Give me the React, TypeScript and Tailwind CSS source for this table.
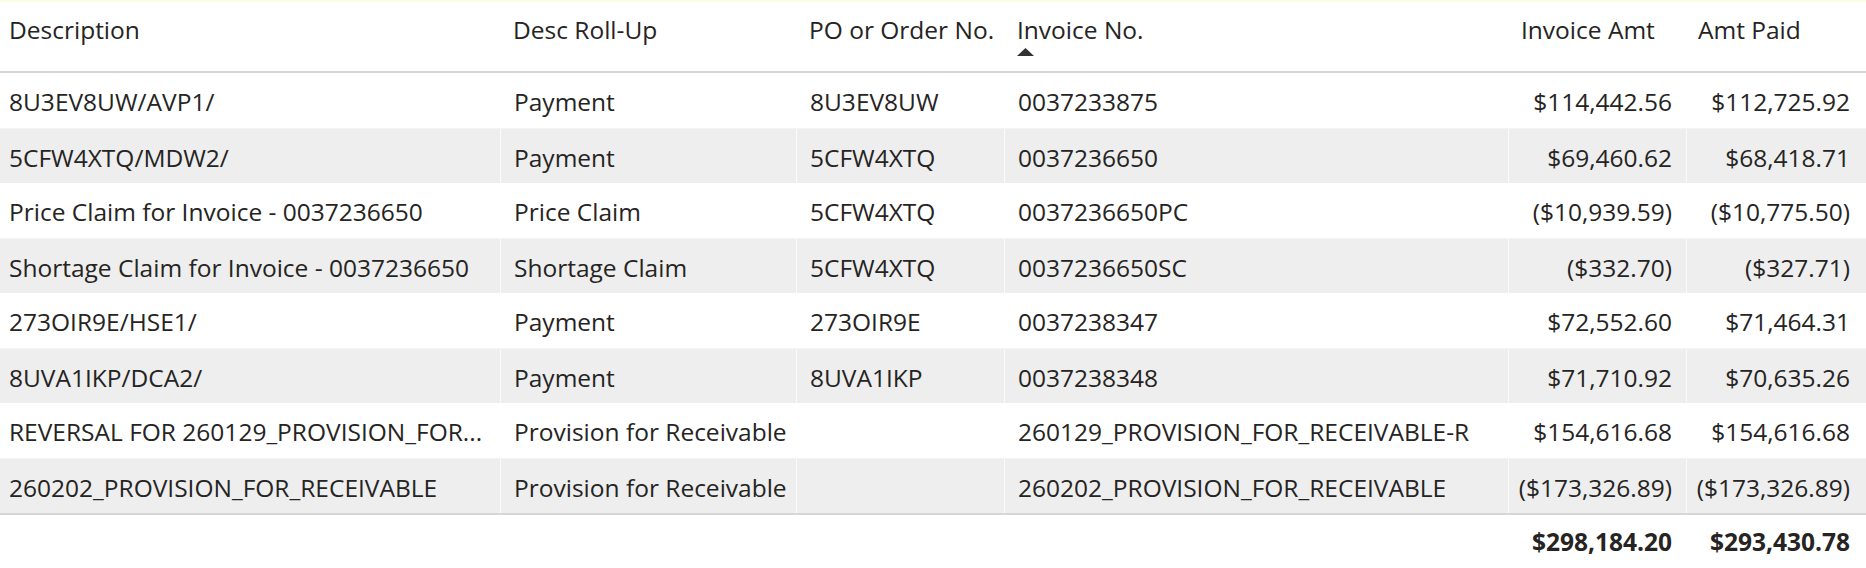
import { clsx } from 'clsx';

type Row = {
  desc: string;
  rollUp: string;
  po: string;
  invoice: string;
  amt: string;
  paid: string;
};

const ROWS: Row[] = [
  { desc: '8U3EV8UW/AVP1/', rollUp: 'Payment', po: '8U3EV8UW', invoice: '0037233875', amt: '$114,442.56', paid: '$112,725.92' },
  { desc: '5CFW4XTQ/MDW2/', rollUp: 'Payment', po: '5CFW4XTQ', invoice: '0037236650', amt: '$69,460.62', paid: '$68,418.71' },
  { desc: 'Price Claim for Invoice - 0037236650', rollUp: 'Price Claim', po: '5CFW4XTQ', invoice: '0037236650PC', amt: '($10,939.59)', paid: '($10,775.50)' },
  { desc: 'Shortage Claim for Invoice - 0037236650', rollUp: 'Shortage Claim', po: '5CFW4XTQ', invoice: '0037236650SC', amt: '($332.70)', paid: '($327.71)' },
  { desc: '273OIR9E/HSE1/', rollUp: 'Payment', po: '273OIR9E', invoice: '0037238347', amt: '$72,552.60', paid: '$71,464.31' },
  { desc: '8UVA1IKP/DCA2/', rollUp: 'Payment', po: '8UVA1IKP', invoice: '0037238348', amt: '$71,710.92', paid: '$70,635.26' },
  { desc: 'REVERSAL FOR 260129_PROVISION_FOR...', rollUp: 'Provision for Receivable', po: '', invoice: '260129_PROVISION_FOR_RECEIVABLE-R', amt: '$154,616.68', paid: '$154,616.68' },
  { desc: '260202_PROVISION_FOR_RECEIVABLE', rollUp: 'Provision for Receivable', po: '', invoice: '260202_PROVISION_FOR_RECEIVABLE', amt: '($173,326.89)', paid: '($173,326.89)' },
];

const GRID = 'grid grid-cols-[500px_296px_208px_504px_178px_180px]';
const CELL = 'truncate whitespace-nowrap border-l border-white/70 pt-[13px] leading-[32px] first:border-l-0';

const SortArrow = () => (
  <svg width="17" height="8" viewBox="0 0 17 8" className="mt-[2px] block">
    <path d="M0 8 8.5 0 17 8Z" fill="#333333" />
  </svg>
);

const App = () => {
  return (
    <div
      className="h-[568px] w-[1866px] overflow-hidden border-t-2 border-[#fcfbe3] bg-white text-[24.5px] text-[#252423]"
      style={{ fontFamily: '"Open Sans", "Noto Sans", sans-serif' }}
    >
      <div className={clsx(GRID, 'h-[71px] border-b-2 border-[#d6d6d6]')}>
        <div className="pl-[9px] pt-[12px] leading-[32px]">Description</div>
        <div className="pl-[13px] pt-[12px] leading-[32px]">Desc Roll-Up</div>
        <div className="pl-[13px] pt-[12px] leading-[32px]">PO or Order No.</div>
        <div className="pl-[13px] pt-[12px] leading-[32px]">
          <div>Invoice No.</div>
          <SortArrow />
        </div>
        <div className="pl-[13px] pt-[12px] leading-[32px]">Invoice Amt</div>
        <div className="pl-[12px] pt-[12px] leading-[32px]">Amt Paid</div>
      </div>

      {ROWS.map((row, i) => (
        <div
          key={row.desc}
          className={clsx(
            GRID,
            'h-[55px]',
            i % 2 === 1 ? 'bg-[#eeeeee] border-t border-[#f4f4f4]' : 'bg-white',
          )}
        >
          <div className={clsx(CELL, 'pl-[9px] pr-[4px]')}>{row.desc}</div>
          <div className={clsx(CELL, 'pl-[13px] pr-[2px]')}>{row.rollUp}</div>
          <div className={clsx(CELL, 'px-[13px]')}>{row.po}</div>
          <div className={clsx(CELL, 'px-[13px]')}>{row.invoice}</div>
          <div className={clsx(CELL, 'pr-[14px] text-right')}>{row.amt}</div>
          <div className={clsx(CELL, 'pr-[16px] text-right')}>{row.paid}</div>
        </div>
      ))}

      <div className={clsx(GRID, 'border-t-2 border-[#d6d6d6] font-bold')}>
        <div className="col-span-4" />
        <div className="pr-[14px] pt-[11px] text-right leading-[32px]">$298,184.20</div>
        <div className="pr-[16px] pt-[11px] text-right leading-[32px]">$293,430.78</div>
      </div>
    </div>
  );
};

export default App;
